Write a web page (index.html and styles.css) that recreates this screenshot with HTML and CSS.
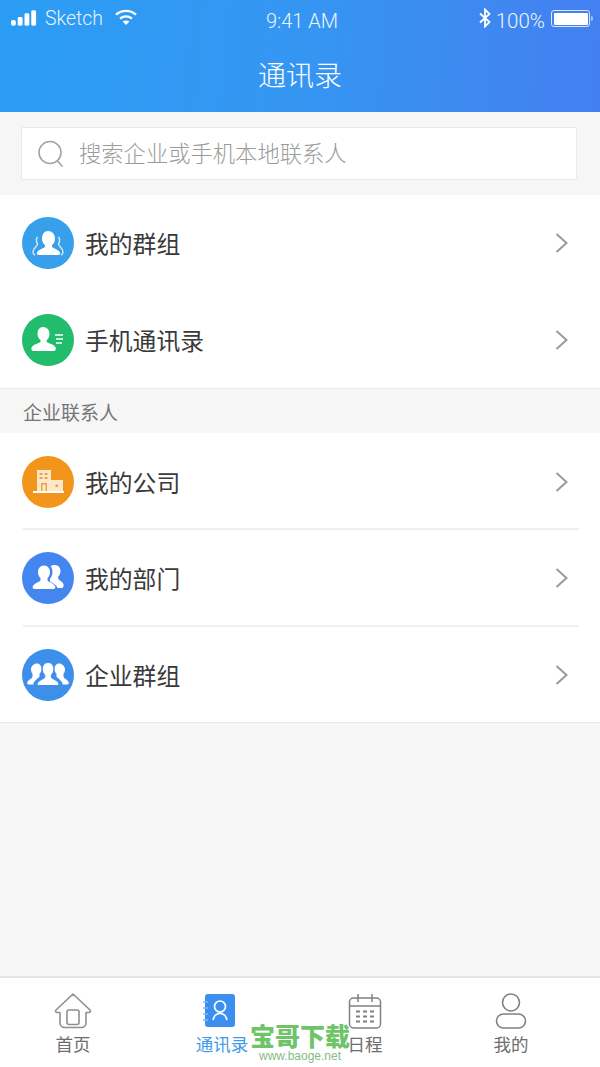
FILE: index.html
```html
<!DOCTYPE html>
<html lang="zh-CN">
<head>
<meta charset="utf-8">
<title>通讯录</title>
<link rel="stylesheet" href="styles.css">
</head>
<body>
<div class="app">
  <header class="header">
    <div class="status">
      <div class="status-left">
        <svg class="signal" width="27" height="16" viewBox="0 0 28 16"><rect x="0" y="10" width="5" height="6" rx="2"/><rect x="7" y="7" width="5" height="9" rx="1.5"/><rect x="14" y="3" width="5" height="13" rx="1.5"/><rect x="21" y="0" width="5" height="16" rx="1.5"/></svg>
        <span class="carrier">Sketch</span>
        <svg class="wifi" width="24" height="16" viewBox="0 0 24 16" fill="none" stroke="#fff"><path d="M2 5.600C8 .6 16 .6 22 5.600" stroke-width="2.400"/><path d="M6 9.600c3.600-2.800 8.400-2.800 12 0" stroke-width="2.400"/><path d="M12 16 8.600 12.600c2-1.500 4.800-1.500 6.800 0z" fill="#fff" stroke="none"/></svg>
      </div>
      <div class="clock">9:41 AM</div>
      <div class="status-right">
        <svg class="bt" width="12" height="20" viewBox="0 0 12 20" fill="none" stroke="#fff" stroke-width="1.800"><path d="M1 5.500 10.500 14 6 18.500V1.500L10.500 6 1 14.500"/></svg>
        <span class="percent">100%</span>
        <span class="battery"><span class="battery-fill"></span></span>
        <span class="battery-tip"></span>
      </div>
    </div>
    <h1 class="title">通讯录</h1>
  </header>

  <div class="search-wrap">
    <div class="search">
      <svg width="30" height="30" viewBox="0 0 30 30" fill="none" stroke="#a3a3a3" stroke-width="1.600"><circle cx="14" cy="13.500" r="11"/><path d="M21.500 22 26.500 27.500"/></svg>
      <span class="placeholder">搜索企业或手机本地联系人</span>
    </div>
  </div>

  <section class="list">
    <div class="row">
      <span class="badge badge-sky"><svg viewBox="0 0 52 52" width="52" height="52"><path fill="#fff" d="M26 14c4 0 7 3 7 7.500 0 3-1.300 5.300-3 6.700v1.600c0 1.200 7 2.700 8 5.700.5 1.500-.2 2.500-1.500 2.500H16.500c-1.300 0-2-1-1.500-2.500 1-3 8-4.500 8-5.700v-1.600c-1.700-1.400-3-3.700-3-6.700 0-4.500 2.500-7.500 6-7.500z"/><path fill="none" stroke="#fff" stroke-opacity=".8" stroke-width="1.400" d="M15.500 20c-2.500 3-.5 5.500 0 7 .6 2-4.500 4-4.500 8 0 1.500.8 2.500 2 3M36.500 20c2.500 3 .5 5.500 0 7-.6 2 4.500 4 4.500 8 0 1.500-.8 2.500-2 3"/></svg></span>
      <span class="row-label">我的群组</span>
      <svg class="chev" width="13" height="22" viewBox="0 0 13 22" fill="none" stroke="#9a9a9a" stroke-width="2"><path d="M1.500 2l10 9-10 9"/></svg>
    </div>
    <div class="row">
      <span class="badge badge-green"><svg viewBox="0 0 52 52" width="52" height="52"><path fill="#fff" d="M21 13c4 0 6.500 3 6.500 6.800 0 3-1.200 5-2.800 6.300v1.700c0 1.600 8 2.200 9 6 .4 1.700-.3 3.200-2 3.200H11.500c-1.700 0-2.400-1.500-2-3.200 1-3.800 9-4.400 9-6v-1.700c-1.600-1.300-3-3.300-3-6.300C15.500 16 17.500 13 21 13z"/><path fill="none" stroke="#fff" stroke-width="1.600" d="M33 21h8M34 25h7M34 29h6"/></svg></span>
      <span class="row-label">手机通讯录</span>
      <svg class="chev" width="13" height="22" viewBox="0 0 13 22" fill="none" stroke="#9a9a9a" stroke-width="2"><path d="M1.500 2l10 9-10 9"/></svg>
    </div>
  </section>

  <div class="section-label">企业联系人</div>

  <section class="list list-ruled">
    <div class="row">
      <span class="badge badge-orange"><svg viewBox="0 0 52 52" width="52" height="52"><path fill="#fde9c8" d="M15 14h14v21H15z"/><path fill="#fde9c8" d="M29 24h12v11H29z"/><path fill="#fff" d="M11 35h31v2H11z"/><path fill="#e9a24a" d="M17.500 17h3v2h-3zm5 0h3v2h-3zm-5 4h3v2h-3zm5 0h3v2h-3zM19 27h6v8h-6zM33.500 28.500h2.500v2.500h-2.500z"/><path fill="#fde9c8" d="M20.500 28.500h3V35h-3z"/></svg></span>
      <span class="row-label">我的公司</span>
      <svg class="chev" width="13" height="22" viewBox="0 0 13 22" fill="none" stroke="#9a9a9a" stroke-width="2"><path d="M1.500 2l10 9-10 9"/></svg>
    </div>
    <div class="row">
      <span class="badge badge-blue"><svg viewBox="0 0 52 52" width="52" height="52"><path fill="#fff" d="M33 13c3.500 0 5.500 3 5.500 6 0 2.500-1 4.500-2.300 5.600v2c0 1.400 4.600 3 5.300 5.800.4 1.500-.3 3.600-1.700 3.600h-4.300c-.5-3-5-5-7.500-6.500v-3c1.800-1.700 2.500-4 2.500-6 0-3-.7-5-2-6.200 1.200-.8 2.800-1.300 4.500-1.300z"/><path fill="#fff" d="M22 13.500c3.800 0 6 3 6 6.500 0 2.700-1 4.800-2.500 6v2.200c0 1.500 7 3 7.800 6.300.3 1.400-.4 2.500-1.800 2.500H12.500c-1.400 0-2.100-1.100-1.800-2.500.8-3.300 7.800-4.800 7.800-6.300V26c-1.500-1.200-2.500-3.300-2.500-6 0-3.500 2.200-6.500 6-6.500z"/></svg></span>
      <span class="row-label">我的部门</span>
      <svg class="chev" width="13" height="22" viewBox="0 0 13 22" fill="none" stroke="#9a9a9a" stroke-width="2"><path d="M1.500 2l10 9-10 9"/></svg>
    </div>
    <div class="row">
      <span class="badge badge-azure"><svg viewBox="0 0 52 52" width="52" height="52"><path fill="#fff" d="M15 14.500c2.800 0 4.500 2.500 4.500 5.500 0 2-1 3.800-2 4.800v2.500c0 1.200-3.500 3-5.500 6-.5.800-.7 1.700-.3 2.200H7c-1.500 0-2.200-.7-1.800-2 .8-2.700 5.300-4.200 5.300-5.700v-3c-1-1-1.500-2.800-1.500-4.800 0-3 3.200-5.500 6-5.500zM37 14.500c2.800 0 6 2.500 6 5.500 0 2-.5 3.800-1.500 4.800v3c0 1.500 4.500 3 5.300 5.700.4 1.300-.3 2-1.800 2h-4.700c.4-.5.200-1.400-.3-2.200-2-3-5.500-4.800-5.500-6v-2.500c-1-1-2-2.800-2-4.800 0-3 1.700-5.500 4.500-5.500z"/><path fill="#fff" d="M26 13.500c3.600 0 5.800 3 5.800 6.500 0 2.700-1 4.800-2.500 6v2.200c0 1.500 6.700 3 7.500 6.300.3 1.300-.4 2-1.700 2H17c-1.300 0-2-.7-1.700-2 .8-3.300 7.500-4.800 7.500-6.300V26c-1.500-1.200-2.500-3.300-2.500-6 0-3.500 2.200-6.500 5.700-6.500z" stroke="#3d8fe9" stroke-width="1"/></svg></span>
      <span class="row-label">企业群组</span>
      <svg class="chev" width="13" height="22" viewBox="0 0 13 22" fill="none" stroke="#9a9a9a" stroke-width="2"><path d="M1.500 2l10 9-10 9"/></svg>
    </div>
  </section>

  <nav class="tabs">
    <div class="tab">
      <svg width="40" height="36" viewBox="0 0 40 36" fill="none" stroke="#8f8f8f" stroke-width="1.600" stroke-linejoin="round"><path d="M20 1 3 17c-1 1 0 2.500 1 2.500h3V30c0 2.500 2 4.500 4.500 4.500h17c2.500 0 4.500-2 4.500-4.500V19.500h3c1 0 2-1.500 1-2.500z"/><rect x="14" y="17" width="12" height="14.500" rx="2"/></svg>
      <span class="tab-label">首页</span>
    </div>
    <div class="tab tab-active">
      <svg width="40" height="36" viewBox="0 0 40 36"><rect x="6" y="1" width="30" height="33" rx="3" fill="#3a8ff0"/><path fill="none" stroke="#fff" stroke-width="1.700" d="M26.500 13.500a5.500 5.500 0 1 1-11 0 5.500 5.500 0 0 1 11 0zM14 27c1-4 4-6.500 7-6.500s6 2.500 7 6.500"/><path stroke="#7fb6f5" stroke-width="1.600" d="M4 9h5M4 15h5M4 21h5M4 27h5"/></svg>
      <span class="tab-label">通讯录</span>
    </div>
    <div class="tab">
      <svg width="40" height="36" viewBox="0 0 40 36" fill="none" stroke="#808080" stroke-width="1.500"><rect x="4.500" y="5" width="31" height="30" rx="4"/><path d="M4.500 13h31M13 1v8M27 1v8"/><path stroke-width="1.800" d="M11 18.500h4M18 18.500h4M25 18.500h4M11 23.500h4M18 23.500h4M25 23.500h4M11 28.500h4M18 28.500h4M25 28.500h4"/></svg>
      <span class="tab-label">日程</span>
    </div>
    <div class="tab">
      <svg width="40" height="36" viewBox="0 0 40 36" fill="none" stroke="#808080" stroke-width="1.600"><circle cx="20" cy="9.500" r="8.500"/><rect x="5.500" y="21" width="29" height="14" rx="7"/></svg>
      <span class="tab-label">我的</span>
    </div>
  </nav>

  <div class="watermark">
    <span class="wm-name">宝哥下载</span>
    <span class="wm-url">www.baoge.net</span>
  </div>
</div>
</body>
</html>
```

FILE: styles.css
```css
* { box-sizing: border-box; }
html, body { margin: 0; padding: 0; }
body {
  width: 600px;
  height: 1067px;
  overflow: hidden;
  background: #f6f6f6;
  font-family: "Noto Sans CJK SC", "Liberation Sans", sans-serif;
}
.app {
  position: relative;
  width: 600px;
  height: 1067px;
  display: flex;
  flex-direction: column;
}

/* Header */
.header {
  height: 112px;
  flex: none;
  color: #fff;
  background: linear-gradient(95deg, #2b9df4 0%, #3596f2 50%, #447ff0 100%);
}
.status {
  height: 40px;
  padding: 5px 7px 0 11px;
  display: grid;
  grid-template-columns: 1fr auto 1fr;
}
.status-left { display: flex; align-items: flex-start; padding-top: 5px; }
.signal { fill: #fff; margin-right: 7px; }
.carrier {
  font: 300 19.500px/18px Roboto, "Liberation Sans", sans-serif;
  color: #e9f5ff;
}
.wifi { margin-left: 11px; margin-top: -1px; }
.clock {
  font: 300 20px/24px Roboto, "Liberation Sans", sans-serif;
  color: #e9f5ff;
  padding-top: 4px;
}
.status-right { display: flex; justify-content: flex-end; align-items: flex-start; }
.bt { margin-top: 3px; margin-right: 5px; }
.percent {
  font: 300 20.500px/24px Roboto, "Liberation Sans", sans-serif;
  color: #e9f5ff;
  padding-top: 4px;
}
.battery {
  width: 39px;
  height: 17px;
  margin: 5px 0 0 6px;
  padding: 1.500px;
  border: 1px solid #dbe6fb;
  border-radius: 3px;
  display: block;
}
.battery-fill { display: block; height: 100%; background: #fff; border-radius: 1px; }
.battery-tip {
  width: 2px;
  height: 5px;
  margin: 11px 0 0 1px;
  background: #a9c4f7;
  border-radius: 0 2px 2px 0;
}
.title {
  margin: 0;
  padding-top: 14px;
  text-align: center;
  font-size: 28px;
  line-height: 40px;
  font-weight: 300;
  letter-spacing: 0;
}

/* Search */
.search-wrap {
  flex: none;
  height: 83px;
  padding: 15px 23px 15px 21px;
}
.search {
  height: 53px;
  background: #fff;
  border: 1px solid #e9e9e9;
  border-radius: 2px;
  display: flex;
  align-items: center;
  padding-left: 14px;
  gap: 13px;
}
.placeholder { font-size: 22.300px; line-height: 30px; color: #9b9b9b; font-weight: 300; margin-bottom: 4px; }

/* Lists */
.list {
  flex: none;
  background: #fff;
  border-bottom: 1px solid #e9e9e9;
}
.row {
  height: 96.500px;
  padding: 0 32px 0 22px;
  display: flex;
  align-items: center;
}
.list-ruled .row { position: relative; height: 96.300px; padding-top: 2px; }
.list-ruled .row + .row::before {
  content: "";
  position: absolute;
  left: 23px;
  right: 21px;
  top: -1px;
  height: 2px;
  background: #efefef;
}
.badge {
  width: 52px;
  height: 52px;
  border-radius: 50%;
  flex: none;
  display: block;
}
.badge svg { display: block; }
.badge-sky { background: #36a0ea; }
.badge-green { background: #21bd6c; }
.badge-orange { background: #f3951b; }
.badge-blue { background: #4386ef; }
.badge-azure { background: #3d8fe9; }
.row-label {
  flex: 1;
  margin-left: 11px;
  font-size: 23.800px;
  line-height: 32px;
  color: #3a3a3a;
  font-weight: 400;
}
.chev { flex: none; }

.section-label {
  flex: none;
  height: 44px;
  padding-left: 23px;
  font-size: 19px;
  line-height: 46px;
  color: #757575;
  background: #f6f6f6;
}

/* Tabs */
.tabs {
  margin-top: auto;
  flex: none;
  height: 91px;
  background: #fff;
  border-top: 2px solid #e6e6e6;
  padding-top: 15px;
  display: grid;
  grid-template-columns: repeat(4, 146px);
}
.tab {
  display: flex;
  flex-direction: column;
  align-items: center;
}
.tab svg { display: block; }
.tab-label {
  margin-top: 3px;
  font-size: 17.500px;
  line-height: 24px;
  color: #6e6e6e;
}
.tab-active .tab-label { color: #3f9bea; padding-left: 6px; }

/* Watermark over the tab bar */
.watermark {
  position: absolute;
  left: 245px;
  top: 1021px;
  width: 110px;
  display: flex;
  flex-direction: column;
  align-items: center;
}
.wm-name {
  font-size: 25px;
  line-height: 29px;
  font-weight: 900;
  color: #6fc46a;
  letter-spacing: 0;
}
.wm-url {
  font: 12px/12px "Liberation Sans", sans-serif;
  color: #85b986;
}
```
